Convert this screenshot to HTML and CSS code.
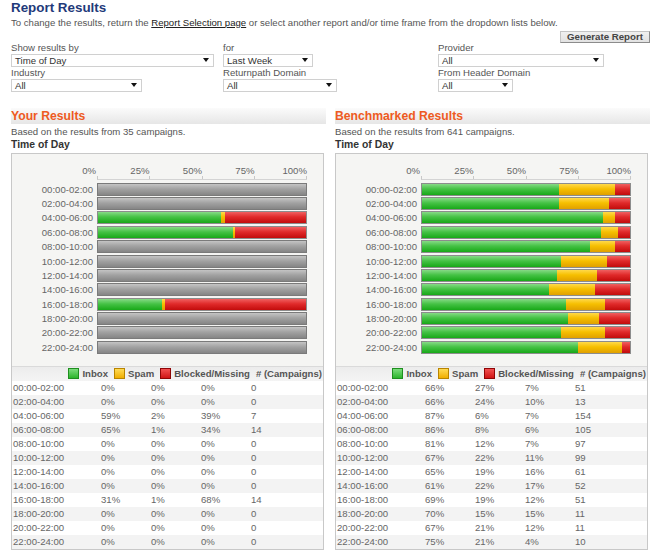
FILE: index.html
```html
<!DOCTYPE html>
<html lang="en">
<head>
<meta charset="utf-8">
<title>Report Results</title>
<link rel="stylesheet" href="styles.css">
</head>
<body>
<h1 class="title">Report Results</h1>
<p class="intro">To change the results, return the <a href="#">Report Selection page</a> or select another report and/or time frame from the dropdown lists below.</p>
<div class="actions"><button class="btn" type="button">Generate Report</button></div>
<div class="filters">
  <div class="field"><label>Show results by</label><div class="select sel-wide"><span>Time of Day</span><i class="caret"></i></div></div>
  <div class="field"><label>for</label><div class="select sel-week"><span>Last Week</span><i class="caret"></i></div></div>
  <div class="field"><label>Provider</label><div class="select sel-provider"><span>All</span><i class="caret"></i></div></div>
  <div class="field"><label>Industry</label><div class="select sel-industry"><span>All</span><i class="caret"></i></div></div>
  <div class="field"><label>Returnpath Domain</label><div class="select sel-return"><span>All</span><i class="caret"></i></div></div>
  <div class="field"><label>From Header Domain</label><div class="select sel-from"><span>All</span><i class="caret"></i></div></div>
</div>

<div class="results">
  <section class="col">
    <h2 class="col-head">Your Results</h2>
    <p class="basis">Based on the results from 35 campaigns.</p>
    <h3 class="chart-title">Time of Day</h3>
    <div class="panel">
      <div class="chart">
        <div class="axis"><span class="axis-zero">0%</span><div class="axis-track"><span>25%</span><span>50%</span><span>75%</span><span>100%</span></div></div>
        <div class="ticks"><i></i><i></i><i></i><i></i></div>
        <div class="bars">
          <div class="bar-row"><span class="bar-label">00:00-02:00</span><div class="bar empty"></div></div>
          <div class="bar-row"><span class="bar-label">02:00-04:00</span><div class="bar empty"></div></div>
          <div class="bar-row"><span class="bar-label">04:00-06:00</span><div class="bar"><i class="seg inbox" style="width:59%"></i><i class="seg spam" style="width:2%"></i><i class="seg blocked" style="width:39%"></i></div></div>
          <div class="bar-row"><span class="bar-label">06:00-08:00</span><div class="bar"><i class="seg inbox" style="width:65%"></i><i class="seg spam" style="width:1%"></i><i class="seg blocked" style="width:34%"></i></div></div>
          <div class="bar-row"><span class="bar-label">08:00-10:00</span><div class="bar empty"></div></div>
          <div class="bar-row"><span class="bar-label">10:00-12:00</span><div class="bar empty"></div></div>
          <div class="bar-row"><span class="bar-label">12:00-14:00</span><div class="bar empty"></div></div>
          <div class="bar-row"><span class="bar-label">14:00-16:00</span><div class="bar empty"></div></div>
          <div class="bar-row"><span class="bar-label">16:00-18:00</span><div class="bar"><i class="seg inbox" style="width:31%"></i><i class="seg spam" style="width:1%"></i><i class="seg blocked" style="width:68%"></i></div></div>
          <div class="bar-row"><span class="bar-label">18:00-20:00</span><div class="bar empty"></div></div>
          <div class="bar-row"><span class="bar-label">20:00-22:00</span><div class="bar empty"></div></div>
          <div class="bar-row"><span class="bar-label">22:00-24:00</span><div class="bar empty"></div></div>
        </div>
      </div>
      <div class="legend">
        <span class="key"><i class="swatch inbox"></i>Inbox</span>
        <span class="key"><i class="swatch spam"></i>Spam</span>
        <span class="key"><i class="swatch blocked"></i>Blocked/Missing</span>
        <span class="key">#&nbsp;(Campaigns)</span>
      </div>
      <table class="data">
        <tr><td>00:00-02:00</td><td>0%</td><td>0%</td><td>0%</td><td>0</td></tr>
        <tr><td>02:00-04:00</td><td>0%</td><td>0%</td><td>0%</td><td>0</td></tr>
        <tr><td>04:00-06:00</td><td>59%</td><td>2%</td><td>39%</td><td>7</td></tr>
        <tr><td>06:00-08:00</td><td>65%</td><td>1%</td><td>34%</td><td>14</td></tr>
        <tr><td>08:00-10:00</td><td>0%</td><td>0%</td><td>0%</td><td>0</td></tr>
        <tr><td>10:00-12:00</td><td>0%</td><td>0%</td><td>0%</td><td>0</td></tr>
        <tr><td>12:00-14:00</td><td>0%</td><td>0%</td><td>0%</td><td>0</td></tr>
        <tr><td>14:00-16:00</td><td>0%</td><td>0%</td><td>0%</td><td>0</td></tr>
        <tr><td>16:00-18:00</td><td>31%</td><td>1%</td><td>68%</td><td>14</td></tr>
        <tr><td>18:00-20:00</td><td>0%</td><td>0%</td><td>0%</td><td>0</td></tr>
        <tr><td>20:00-22:00</td><td>0%</td><td>0%</td><td>0%</td><td>0</td></tr>
        <tr><td>22:00-24:00</td><td>0%</td><td>0%</td><td>0%</td><td>0</td></tr>
      </table>
    </div>
  </section>

  <section class="col">
    <h2 class="col-head">Benchmarked Results</h2>
    <p class="basis">Based on the results from 641 campaigns.</p>
    <h3 class="chart-title">Time of Day</h3>
    <div class="panel">
      <div class="chart">
        <div class="axis"><span class="axis-zero">0%</span><div class="axis-track"><span>25%</span><span>50%</span><span>75%</span><span>100%</span></div></div>
        <div class="ticks"><i></i><i></i><i></i><i></i></div>
        <div class="bars">
          <div class="bar-row"><span class="bar-label">00:00-02:00</span><div class="bar"><i class="seg inbox" style="width:66%"></i><i class="seg spam" style="width:27%"></i><i class="seg blocked" style="width:7%"></i></div></div>
          <div class="bar-row"><span class="bar-label">02:00-04:00</span><div class="bar"><i class="seg inbox" style="width:66%"></i><i class="seg spam" style="width:24%"></i><i class="seg blocked" style="width:10%"></i></div></div>
          <div class="bar-row"><span class="bar-label">04:00-06:00</span><div class="bar"><i class="seg inbox" style="width:87%"></i><i class="seg spam" style="width:6%"></i><i class="seg blocked" style="width:7%"></i></div></div>
          <div class="bar-row"><span class="bar-label">06:00-08:00</span><div class="bar"><i class="seg inbox" style="width:86%"></i><i class="seg spam" style="width:8%"></i><i class="seg blocked" style="width:6%"></i></div></div>
          <div class="bar-row"><span class="bar-label">08:00-10:00</span><div class="bar"><i class="seg inbox" style="width:81%"></i><i class="seg spam" style="width:12%"></i><i class="seg blocked" style="width:7%"></i></div></div>
          <div class="bar-row"><span class="bar-label">10:00-12:00</span><div class="bar"><i class="seg inbox" style="width:67%"></i><i class="seg spam" style="width:22%"></i><i class="seg blocked" style="width:11%"></i></div></div>
          <div class="bar-row"><span class="bar-label">12:00-14:00</span><div class="bar"><i class="seg inbox" style="width:65%"></i><i class="seg spam" style="width:19%"></i><i class="seg blocked" style="width:16%"></i></div></div>
          <div class="bar-row"><span class="bar-label">14:00-16:00</span><div class="bar"><i class="seg inbox" style="width:61%"></i><i class="seg spam" style="width:22%"></i><i class="seg blocked" style="width:17%"></i></div></div>
          <div class="bar-row"><span class="bar-label">16:00-18:00</span><div class="bar"><i class="seg inbox" style="width:69%"></i><i class="seg spam" style="width:19%"></i><i class="seg blocked" style="width:12%"></i></div></div>
          <div class="bar-row"><span class="bar-label">18:00-20:00</span><div class="bar"><i class="seg inbox" style="width:70%"></i><i class="seg spam" style="width:15%"></i><i class="seg blocked" style="width:15%"></i></div></div>
          <div class="bar-row"><span class="bar-label">20:00-22:00</span><div class="bar"><i class="seg inbox" style="width:67%"></i><i class="seg spam" style="width:21%"></i><i class="seg blocked" style="width:12%"></i></div></div>
          <div class="bar-row"><span class="bar-label">22:00-24:00</span><div class="bar"><i class="seg inbox" style="width:75%"></i><i class="seg spam" style="width:21%"></i><i class="seg blocked" style="width:4%"></i></div></div>
        </div>
      </div>
      <div class="legend">
        <span class="key"><i class="swatch inbox"></i>Inbox</span>
        <span class="key"><i class="swatch spam"></i>Spam</span>
        <span class="key"><i class="swatch blocked"></i>Blocked/Missing</span>
        <span class="key">#&nbsp;(Campaigns)</span>
      </div>
      <table class="data">
        <tr><td>00:00-02:00</td><td>66%</td><td>27%</td><td>7%</td><td>51</td></tr>
        <tr><td>02:00-04:00</td><td>66%</td><td>24%</td><td>10%</td><td>13</td></tr>
        <tr><td>04:00-06:00</td><td>87%</td><td>6%</td><td>7%</td><td>154</td></tr>
        <tr><td>06:00-08:00</td><td>86%</td><td>8%</td><td>6%</td><td>105</td></tr>
        <tr><td>08:00-10:00</td><td>81%</td><td>12%</td><td>7%</td><td>97</td></tr>
        <tr><td>10:00-12:00</td><td>67%</td><td>22%</td><td>11%</td><td>99</td></tr>
        <tr><td>12:00-14:00</td><td>65%</td><td>19%</td><td>16%</td><td>61</td></tr>
        <tr><td>14:00-16:00</td><td>61%</td><td>22%</td><td>17%</td><td>52</td></tr>
        <tr><td>16:00-18:00</td><td>69%</td><td>19%</td><td>12%</td><td>51</td></tr>
        <tr><td>18:00-20:00</td><td>70%</td><td>15%</td><td>15%</td><td>11</td></tr>
        <tr><td>20:00-22:00</td><td>67%</td><td>21%</td><td>12%</td><td>11</td></tr>
        <tr><td>22:00-24:00</td><td>75%</td><td>21%</td><td>4%</td><td>10</td></tr>
      </table>
    </div>
  </section>
</div>
</body>
</html>
```
FILE: styles.css
```css
* { box-sizing: border-box; }

body {
  margin: 0;
  padding: 0 5px 0 11px;
  font-family: "Liberation Sans", Arial, sans-serif;
  font-size: 9.6px;
  color: #555;
  background: #fff;
}

.title {
  margin: 0;
  font-size: 13.4px;
  line-height: 15px;
  font-weight: bold;
  color: #1f3a7a;
}

.intro {
  margin: 1.7px 0 0;
  line-height: 12px;
  color: #555;
}
.intro a { color: #222; text-decoration: underline; }

.actions {
  display: flex;
  justify-content: flex-end;
  margin-top: 2px;
  height: 11px;
}
.btn {
  width: 90px;
  height: 12px;
  padding: 0;
  margin: 0;
  font-family: inherit;
  font-size: 9.7px;
  line-height: 10px;
  font-weight: bold;
  color: #444;
  background: linear-gradient(#f0f0f0, #e2e2e2);
  border: 1px solid #c4c4c4;
  border-right-color: #8c8c8c;
  border-bottom-color: #8c8c8c;
}

.filters {
  display: grid;
  grid-template-columns: 212px 215px 1fr;
}
.field label { display: block; line-height: 11px; color: #555; }
.select {
  margin-top: 1px;
  height: 13px;
  display: flex;
  align-items: center;
  justify-content: space-between;
  padding: 0 4px 0 3px;
  background: #fff;
  border: 1px solid #d0d0d0;
  color: #333;
  line-height: 11px;
}
.caret {
  width: 0;
  height: 0;
  border-left: 3px solid transparent;
  border-right: 3px solid transparent;
  border-top: 4px solid #111;
}
.sel-wide { width: 203px; }
.sel-week { width: 90px; }
.sel-provider { width: 166px; }
.sel-industry { width: 131px; }
.sel-return { width: 114px; }
.sel-from { width: 75px; }

.results {
  display: flex;
  gap: 9px;
  margin-top: 16.8px;
}
.col { width: 316px; }
.col-head {
  margin: 0;
  height: 16px;
  line-height: 16px;
  font-size: 12.2px;
  font-weight: bold;
  color: #ee5a22;
  background: linear-gradient(#fbfbfb, #e6e6e6);
}
.basis { margin: 2px 0 0; line-height: 12px; color: #555; }
.chart-title {
  margin: 0;
  font-size: 10.4px;
  line-height: 13px;
  font-weight: bold;
  color: #333;
}

.panel {
  margin-top: 1.4px;
  width: 313px;
  border: 1px solid #c8c8c8;
}
.chart {
  background: #f5f5f3;
  padding: 11.5px 16px 12px 0;
  color: #666;
}
.axis { display: flex; line-height: 11px; }
.axis-zero { width: 85px; text-align: right; padding-right: 1px; }
.axis-track {
  width: 210px;
  display: grid;
  grid-template-columns: repeat(4, 1fr);
}
.axis-track span { text-align: right; }
.ticks {
  margin-left: 85px;
  width: 210px;
  height: 4px;
  display: grid;
  grid-template-columns: repeat(4, 1fr);
  border-left: 1px solid #c8c8c8;
  border-bottom: 1px solid #d4d4d4;
}
.ticks i { border-right: 1px solid #c8c8c8; }

.bars { margin-top: 2.2px; }
.bar-row {
  display: flex;
  align-items: center;
  height: 13px;
  margin-bottom: 1.4px;
}
.bar-row:last-child { margin-bottom: 0; }
.bar-label {
  width: 81px;
  margin-right: 4px;
  text-align: right;
  line-height: 13px;
}
.bar {
  width: 210px;
  height: 13px;
  display: flex;
  border: 1px solid #8c8c8c;
  overflow: hidden;
}
.bar.empty { background: linear-gradient(#c4c4c4, #a2a2a2 45%, #858585); border-color: #7a7a7a; }
.seg { display: block; height: 100%; }
.seg.inbox { background: linear-gradient(#86da86, #45c245 45%, #18a818); }
.seg.spam { background: linear-gradient(#ffd94a, #f6bf00 45%, #e0a000); }
.seg.blocked { background: linear-gradient(#f06060, #e02a2a 45%, #c20c0c); }

.legend {
  height: 15px;
  display: flex;
  justify-content: flex-end;
  align-items: center;
  padding-right: 1px;
  border-top: 1px solid #dadada;
  background: linear-gradient(#ececec, #f4f4f4);
  font-weight: bold;
  color: #555;
}
.key { display: flex; align-items: center; margin-left: 6px; }
.key:first-child { margin-left: 0; }
.swatch {
  width: 11px;
  height: 11px;
  margin-right: 3px;
  border: 1px solid;
}
.swatch.inbox { background: linear-gradient(#7ddc7d, #2cb52c); border-color: #1f8f1f; }
.swatch.spam { background: linear-gradient(#ffdb55, #f0ae00); border-color: #b88400; }
.swatch.blocked { background: linear-gradient(#f25050, #d01515); border-color: #8e0606; }

.data {
  width: 100%;
  border-collapse: collapse;
  color: #666;
}
.data td {
  height: 14px;
  padding: 0 0 0 1px;
  line-height: 14px;
  white-space: nowrap;
}
.data td:nth-child(1) { width: 88px; }
.data td:nth-child(2),
.data td:nth-child(3),
.data td:nth-child(4) { width: 50px; }
.data tr:nth-child(even) { background: #f3f3f3; }
```
